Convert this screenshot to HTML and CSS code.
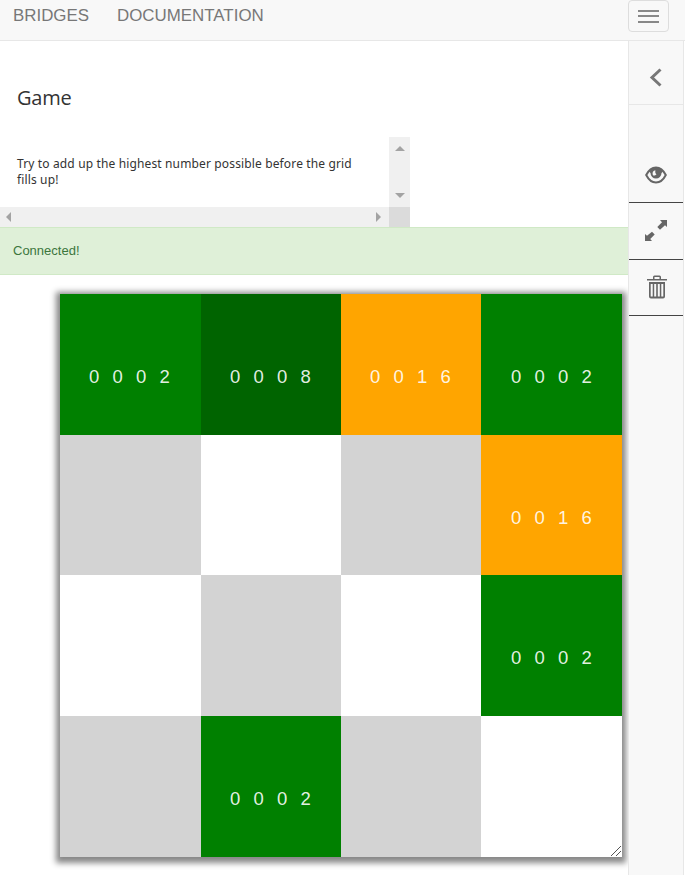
FILE: index.html
```html
<!DOCTYPE html>
<html lang="en">
<head>
<meta charset="utf-8">
<title>Game</title>
<link rel="stylesheet" href="styles.css">
</head>
<body>
<header class="navbar">
  <nav class="links"><a>BRIDGES</a><a>DOCUMENTATION</a></nav>
  <button class="toggle" aria-label="Menu"><i></i><i></i><i></i></button>
</header>
<div class="layout">
  <main class="content">
    <h1 class="title">Game</h1>
    <section class="description">
      <p class="text">Try to add up the highest number possible before the grid<br>fills up!</p>
      <div class="vbar"><i class="up"></i><i class="down"></i></div>
      <div class="hbar"><i class="left"></i><i class="right"></i></div>
      <div class="corner"></div>
    </section>
    <div class="alert">Connected!</div>
    <div class="board">
      <div class="cell green">0 0 0 2</div><div class="cell dark">0 0 0 8</div><div class="cell orange">0 0 1 6</div><div class="cell green">0 0 0 2</div>
      <div class="cell gray"></div><div class="cell"></div><div class="cell gray"></div><div class="cell orange">0 0 1 6</div>
      <div class="cell"></div><div class="cell gray"></div><div class="cell"></div><div class="cell green">0 0 0 2</div>
      <div class="cell gray"></div><div class="cell green">0 0 0 2</div><div class="cell gray"></div><div class="cell"></div>
      <svg class="grip" width="12" height="12" viewBox="0 0 12 12"><path d="M1 11L11 1M6 11L11 6"/></svg>
    </div>
  </main>
  <aside class="sidebar">
    <div class="tool back"><svg width="14" height="20" viewBox="0 0 14 20"><path class="line" d="M11.500 1.500L3 9.500L11.500 17.500"/></svg></div>
    <div class="tool eye"><svg width="22" height="18" viewBox="0 0 22 18"><path class="rim" d="M1.200 9C4 3.500 7 1.500 11 1.500S18 3.500 20.800 9C18 14.500 15 16.500 11 16.500S4 14.500 1.200 9Z"/><path d="M4 5.500C6 2.500 8 1 11 1S16 2.500 18 5.500L16.500 7A5.500 5.500 0 1 1 5.500 7Z"/><path class="glint" d="M8 9.300C7 6.500 8.200 4.500 10.500 4.500C9.800 6.500 10.500 7.500 11.500 8.300C10.500 9.500 9 10 8 9.300Z"/></svg></div>
    <div class="tool expand"><svg width="22" height="22" viewBox="0 0 22 22"><path d="M15 0H22V7L20 5.200L15 9.700L12.300 7L17 2.200ZM0 14L2 15.800L7 11.800L9.700 14.500L5.200 19L7 21H0Z"/></svg></div>
    <div class="tool trash"><svg width="20" height="24" viewBox="0 0 20 24"><path fill-rule="evenodd" d="M6 4V2Q6 .5 7.500 .5H12.500Q14 .5 14 2V4H20V5.500H0V4ZM7.500 4H12.500V2H7.500ZM2 7H18V21.500Q18 23.500 16 23.500H4Q2 23.500 2 21.500ZM3.700 9V21.500H5.700V9ZM7.200 9V21.500H9.200V9ZM10.800 9V21.500H12.800V9ZM14.300 9V21.500H16.300V9Z"/></svg></div>
  </aside>
</div>
</body>
</html>
```
FILE: styles.css
```css
* { box-sizing: border-box; }
body {
  margin: 0;
  height: 875px;
  overflow: hidden;
  background: #fff;
  font-family: "Liberation Sans", Arial, sans-serif;
}
.navbar {
  display: flex;
  justify-content: space-between;
  height: 41px;
  padding-left: 13px;
  padding-right: 16px;
  background: #f8f8f8;
  border-bottom: 1px solid #e7e7e7;
}
.links {
  display: flex;
  gap: 28px;
  padding-top: 6px;
  font-size: 16.9px;
  line-height: 20px;
  color: #777;
}
.toggle {
  display: flex;
  flex-direction: column;
  align-items: center;
  gap: 4px;
  width: 41px;
  height: 32px;
  padding: 9px 0 0;
  background: transparent;
  border: 1px solid #ddd;
  border-radius: 4px;
}
.toggle i { width: 21px; height: 2px; background: #888; }
.toggle i:nth-child(2) { margin-top: -1px; }
.layout { display: flex; height: 834px; }
.content { width: 628px; }
.sidebar {
  position: relative;
  z-index: 1;
  width: 56px;
  background: #f8f8f8;
  border-left: 1px solid #e7e7e7;
  border-right: 1px solid #e7e7e7;
}
.title {
  height: 96px;
  margin: 0;
  padding: 44px 0 0 17px;
  font: 400 20px/26px "Open Sans", sans-serif;
  letter-spacing: -0.2px;
  color: #333;
}
.description {
  display: grid;
  grid-template-columns: 389px 21px;
  grid-template-rows: 70px 20px;
}
.text {
  margin: 0;
  padding: 19px 0 0 17px;
  font: 12px/16px "Noto Sans", sans-serif;
  letter-spacing: 0.14px;
  white-space: nowrap;
  color: #333;
}
.vbar, .hbar { display: flex; align-items: center; justify-content: space-between; background: #f0f0f0; }
.vbar { flex-direction: column; padding: 9px 0; }
.hbar { padding: 0 8px 0 6px; }
.corner { background: #dbdbdb; }
.up, .down { border: 5px solid transparent; border-top-width: 0; border-bottom: 5px solid #a3a3a3; }
.down { border-top: 5px solid #a3a3a3; border-bottom-width: 0; }
.left, .right { border: 5px solid transparent; border-left-width: 0; border-right: 5px solid #a3a3a3; }
.right { border-left: 5px solid #a3a3a3; border-right-width: 0; }
.alert {
  height: 48px;
  padding: 15px 13px;
  font-size: 13px;
  line-height: 16px;
  color: #3c763d;
  background: #dff0d8;
  border: solid #d0e9c6;
  border-width: 1px 0;
}
.board {
  position: relative;
  display: grid;
  grid-template-columns: 141px 140px 140px 141px;
  grid-template-rows: 141px 140px 141px 141px;
  width: 562px;
  height: 563px;
  margin: 19px 0 0 60px;
  background: #fff;
  box-shadow: 0 2px 6px 4px #888;
}
.cell {
  padding: 72px 0 0 29px;
  font-size: 18.5px;
  line-height: 22px;
  letter-spacing: 4.05px;
  white-space: nowrap;
  color: rgba(255, 255, 255, 0.9);
}
.cell:nth-child(4n) { padding-left: 30px; }
.green { background: #008000; }
.dark { background: #006400; }
.orange { background: #ffa500; }
.gray { background: #d3d3d3; }
.grip { position: absolute; right: 0; bottom: 0; fill: none; stroke: #555; stroke-width: 1; }
.tool { display: flex; justify-content: center; fill: #666; }
.tool svg { display: block; }
.line { fill: none; stroke: #777; stroke-width: 3; }
.rim { fill: none; stroke: #666; stroke-width: 2; }
.glint { fill: #f8f8f8; }
.back { height: 64px; padding: 27px 1px 0 0; border-bottom: 1px solid #e7e7e7; }
.eye { height: 98px; padding-top: 61px; border-bottom: 1px solid #444; }
.expand { height: 57px; padding-top: 17px; border-bottom: 1px solid #444; }
.trash { height: 56px; padding: 15px 0 0 1px; border-bottom: 1px solid #444; }
```
